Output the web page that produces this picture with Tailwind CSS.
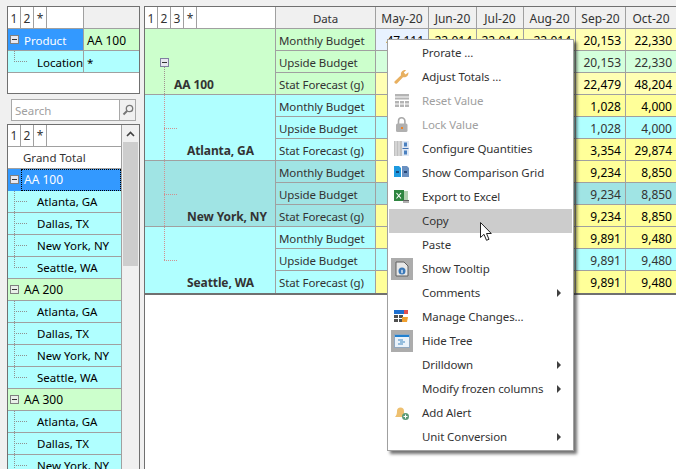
<!DOCTYPE html>
<html lang="en">
<head>
    <meta charset="UTF-8">
    <title>Forecast grid</title>
    <script src="https://cdn.jsdelivr.net/npm/@tailwindcss/browser@4"></script>
</head>
<body class="relative h-[469px] w-[676px] overflow-hidden bg-[#f0f0f0] font-['Noto_Sans',sans-serif] text-[11.5px] leading-[21px] tracking-[-0.1px] text-[#333]">
<div class="flex h-full">
    <!-- left panel -->
    <aside class="ml-[7px] mt-[6px] w-[133px] shrink-0 tracking-normal">
        <div class="h-[88px] border border-[#707070] bg-white leading-[23px]">
            <div class="flex h-[22px] border-b border-[#a0a0a0]">
                <div class="w-[13px] border-r border-[#a0a0a0] text-center text-[12px]">1</div>
                <div class="w-[13px] border-r border-[#a0a0a0] text-center text-[12px]">2</div>
                <div class="w-[13px] border-r border-[#a0a0a0] text-center text-[12px]">*</div>
                <div class="w-[37px] border-r border-[#a0a0a0]"></div>
                <div class="flex-1 bg-[#f0f0f0]"></div>
            </div>
            <div class="flex h-[22px] border-b border-[#a0a0a0]">
                <div class="relative w-[76px] border-r border-[#a0a0a0] bg-[#3399ff] pl-[16px] text-white">
                    Product
                    <span class="absolute left-[2px] top-[6px] flex h-[9px] w-[9px] items-center justify-center border border-[#808080] bg-[#e8e8f0]"><span class="h-px w-[5px] bg-[#333]"></span></span>
                </div>
                <div class="flex-1 bg-[#ccffcc] pl-[3px] text-[12px] text-black">AA 100</div>
            </div>
            <div class="flex h-[22px] border-b border-[#a0a0a0]">
                <div class="relative w-[76px] border-r border-[#a0a0a0] bg-[#b0ffff] pl-[29px] text-black">
                    Location
                    <span class="absolute left-[6px] top-0 h-[11px] border-l border-dotted border-[#909090]"></span>
                    <span class="absolute left-[6px] top-[10px] w-[13px] border-t border-dotted border-[#909090]"></span>
                </div>
                <div class="flex-1 bg-[#b0ffff] pl-[3px] text-black">*</div>
            </div>
        </div>

        <div class="ml-[4px] mt-[5px] flex h-[22px] w-[125px] border border-[#a8a8a8] bg-white">
            <div class="flex-1 pl-[3px] text-[#a0a0a0]">Search</div>
            <div class="flex w-[16px] items-center justify-center border-l border-[#a8a8a8] bg-[#f0f0f0]">
                <svg width="12" height="12" viewBox="0 0 12 12" fill="none" stroke="#777" stroke-width="1.3"><circle cx="7.5" cy="4.500" r="3.200"/><path d="M5 7 1.500 10.500" stroke-width="2"/></svg>
            </div>
        </div>

        <div class="mt-[3px] flex h-[400px] border border-b-0 border-[#707070] bg-white">
            <div class="w-[114px] border-r border-[#a0a0a0]">
                <div class="flex h-[22px] border-b border-[#a0a0a0]">
                    <div class="w-[13px] border-r border-[#a0a0a0] text-center text-[12px]">1</div>
                    <div class="w-[13px] border-r border-[#a0a0a0] text-center text-[12px]">2</div>
                    <div class="w-[13px] border-r border-[#a0a0a0] text-center text-[12px]">*</div>
                </div>
                <div class="h-[22px] border-b border-[#a0a0a0] pl-[15px]">Grand Total</div>
                <div class="relative h-[22px] bg-[#3399ff] pl-[16px] text-[12px] text-white">
                    <div class="absolute inset-y-0 left-[13px] right-0 border border-dotted border-black"></div>
                    AA 100
                    <span class="absolute left-[2px] top-[6px] flex h-[9px] w-[9px] items-center justify-center border border-[#808080] bg-[#e8e8f0]"><span class="h-px w-[5px] bg-[#333]"></span></span>
                </div>
                <div class="relative h-[22px] border-b border-[#a0a0a0] bg-[#b0ffff] pl-[29px] text-black">Atlanta, GA<span class="absolute inset-y-0 left-[6px] border-l border-dotted border-[#909090]"></span><span class="absolute left-[6px] top-[10px] w-[13px] border-t border-dotted border-[#909090]"></span></div>
                <div class="relative h-[22px] border-b border-[#a0a0a0] bg-[#b0ffff] pl-[29px] text-black">Dallas, TX<span class="absolute inset-y-0 left-[6px] border-l border-dotted border-[#909090]"></span><span class="absolute left-[6px] top-[10px] w-[13px] border-t border-dotted border-[#909090]"></span></div>
                <div class="relative h-[22px] border-b border-[#a0a0a0] bg-[#b0ffff] pl-[29px] text-black">New York, NY<span class="absolute inset-y-0 left-[6px] border-l border-dotted border-[#909090]"></span><span class="absolute left-[6px] top-[10px] w-[13px] border-t border-dotted border-[#909090]"></span></div>
                <div class="relative h-[22px] border-b border-[#a0a0a0] bg-[#b0ffff] pl-[29px] text-black">Seattle, WA<span class="absolute left-[6px] top-0 h-[11px] border-l border-dotted border-[#909090]"></span><span class="absolute left-[6px] top-[10px] w-[13px] border-t border-dotted border-[#909090]"></span></div>
                <div class="relative h-[22px] border-b border-[#a0a0a0] bg-[#ccffcc] pl-[16px] text-[12px] text-black">
                    AA 200
                    <span class="absolute left-[2px] top-[6px] flex h-[9px] w-[9px] items-center justify-center border border-[#808080] bg-[#e8f0e8]"><span class="h-px w-[5px] bg-[#333]"></span></span>
                </div>
                <div class="relative h-[22px] border-b border-[#a0a0a0] bg-[#b0ffff] pl-[29px] text-black">Atlanta, GA<span class="absolute inset-y-0 left-[6px] border-l border-dotted border-[#909090]"></span><span class="absolute left-[6px] top-[10px] w-[13px] border-t border-dotted border-[#909090]"></span></div>
                <div class="relative h-[22px] border-b border-[#a0a0a0] bg-[#b0ffff] pl-[29px] text-black">Dallas, TX<span class="absolute inset-y-0 left-[6px] border-l border-dotted border-[#909090]"></span><span class="absolute left-[6px] top-[10px] w-[13px] border-t border-dotted border-[#909090]"></span></div>
                <div class="relative h-[22px] border-b border-[#a0a0a0] bg-[#b0ffff] pl-[29px] text-black">New York, NY<span class="absolute inset-y-0 left-[6px] border-l border-dotted border-[#909090]"></span><span class="absolute left-[6px] top-[10px] w-[13px] border-t border-dotted border-[#909090]"></span></div>
                <div class="relative h-[22px] border-b border-[#a0a0a0] bg-[#b0ffff] pl-[29px] text-black">Seattle, WA<span class="absolute left-[6px] top-0 h-[11px] border-l border-dotted border-[#909090]"></span><span class="absolute left-[6px] top-[10px] w-[13px] border-t border-dotted border-[#909090]"></span></div>
                <div class="relative h-[22px] border-b border-[#a0a0a0] bg-[#ccffcc] pl-[16px] text-[12px] text-black">
                    AA 300
                    <span class="absolute left-[2px] top-[6px] flex h-[9px] w-[9px] items-center justify-center border border-[#808080] bg-[#e8f0e8]"><span class="h-px w-[5px] bg-[#333]"></span></span>
                </div>
                <div class="relative h-[22px] border-b border-[#a0a0a0] bg-[#b0ffff] pl-[29px] text-black">Atlanta, GA<span class="absolute inset-y-0 left-[6px] border-l border-dotted border-[#909090]"></span><span class="absolute left-[6px] top-[10px] w-[13px] border-t border-dotted border-[#909090]"></span></div>
                <div class="relative h-[22px] border-b border-[#a0a0a0] bg-[#b0ffff] pl-[29px] text-black">Dallas, TX<span class="absolute inset-y-0 left-[6px] border-l border-dotted border-[#909090]"></span><span class="absolute left-[6px] top-[10px] w-[13px] border-t border-dotted border-[#909090]"></span></div>
                <div class="relative h-[22px] border-b border-[#a0a0a0] bg-[#b0ffff] pl-[29px] text-black">New York, NY<span class="absolute inset-y-0 left-[6px] border-l border-dotted border-[#909090]"></span><span class="absolute left-[6px] top-[10px] w-[13px] border-t border-dotted border-[#909090]"></span></div>
            </div>
            <!-- scrollbar -->
            <div class="flex-1 bg-[#f0f0f0] px-px">
                <div class="flex h-[17px] items-center justify-center">
                    <svg width="9" height="6" viewBox="0 0 9 6" fill="none" stroke="#404040" stroke-width="1.6"><path d="M1 5 4.500 1.500 8 5"/></svg>
                </div>
                <div class="h-[124px] bg-[#cdcdcd]"></div>
            </div>
        </div>
    </aside>

    <!-- main grid -->
    <main class="ml-[4px] mt-[6px] flex-1 border-l border-t border-[#707070] bg-white leading-[23px]">
        <div class="grid grid-cols-[131px_100px_53px_48px_47px_52px_50px_50px] grid-rows-[22px_repeat(12,22px)] border-b-2 border-[#707070] text-[#333]">
            <!-- header -->
            <div class="flex border-b border-r border-[#a0a0a0] bg-white text-[12px] tracking-normal">
                <div class="w-[13px] border-r border-[#a0a0a0] text-center">1</div>
                <div class="w-[13px] border-r border-[#a0a0a0] text-center">2</div>
                <div class="w-[13px] border-r border-[#a0a0a0] text-center">3</div>
                <div class="w-[13px] border-r border-[#a0a0a0] text-center">*</div>
            </div>
            <div class="border-b border-r border-[#a0a0a0] bg-[#f0f0f0] text-center">Data</div>
            <div class="border-b border-r border-[#a0a0a0] bg-[#f0f0f0] text-center text-[12px] tracking-normal">May-20</div>
            <div class="border-b border-r border-[#a0a0a0] bg-[#f0f0f0] text-center text-[12px] tracking-normal">Jun-20</div>
            <div class="border-b border-r border-[#a0a0a0] bg-[#f0f0f0] text-center text-[12px] tracking-normal">Jul-20</div>
            <div class="border-b border-r border-[#a0a0a0] bg-[#f0f0f0] text-center text-[12px] tracking-normal">Aug-20</div>
            <div class="border-b border-r border-[#a0a0a0] bg-[#f0f0f0] text-center text-[12px] tracking-normal">Sep-20</div>
            <div class="border-b border-[#a0a0a0] bg-[#f0f0f0] text-center text-[12px] tracking-normal">Oct-20</div>

            <!-- AA 100 -->
            <div class="relative col-start-1 row-span-3 row-start-2 border-b border-r border-[#a0a0a0] bg-[#ccffcc] pl-[29px] pt-[44px] text-[12px] font-bold">
                AA 100
                <span class="absolute left-[15px] top-[29px] flex h-[9px] w-[9px] items-center justify-center border border-[#8080a0] bg-[#e8e8f0]"><span class="h-px w-[5px] bg-[#333]"></span></span>
                <span class="absolute bottom-0 left-[19px] top-[38px] border-l border-dotted border-[#a09090]"></span>
            </div>
            <div class="col-start-2 row-start-2 border-b border-r border-[#a0a0a0] bg-[#ccffcc] pl-[3px]">Monthly Budget</div>
            <div class="col-start-3 row-start-2 border-b border-r border-[#a0a0a0] bg-[#e8f2ff] bg-[radial-gradient(#d0d8c8_0.5px,transparent_0.7px)] bg-size-[4px_4px] pr-[4px] text-right text-[12px] tracking-normal text-black">47,111</div>
            <div class="border-b border-r border-[#a0a0a0] bg-[#ffffb4] bg-[radial-gradient(#e8d880_0.5px,transparent_0.7px)] bg-size-[4px_4px] pr-[4px] text-right text-[12px] tracking-normal text-black">22,014</div>
            <div class="border-b border-r border-[#a0a0a0] bg-[#ffffb4] bg-[radial-gradient(#e8d880_0.5px,transparent_0.7px)] bg-size-[4px_4px] pr-[4px] text-right text-[12px] tracking-normal text-black">22,014</div>
            <div class="border-b border-r border-[#a0a0a0] bg-[#ffffb4] bg-[radial-gradient(#e8d880_0.5px,transparent_0.7px)] bg-size-[4px_4px] pr-[4px] text-right text-[12px] tracking-normal text-black">22,014</div>
            <div class="border-b border-r border-[#a0a0a0] bg-[#ffffb4] bg-[radial-gradient(#e8d880_0.5px,transparent_0.7px)] bg-size-[4px_4px] pr-[4px] text-right text-[12px] tracking-normal text-black">20,153</div>
            <div class="border-b border-[#a0a0a0] bg-[#ffffb4] bg-[radial-gradient(#e8d880_0.5px,transparent_0.7px)] bg-size-[4px_4px] pr-[4px] text-right text-[12px] tracking-normal text-black">22,330</div>

            <div class="col-start-2 row-start-3 border-b border-r border-[#a0a0a0] bg-[#ccffcc] pl-[3px]">Upside Budget</div>
            <div class="border-b border-r border-[#a0a0a0] bg-[#d4ffdc] bg-[radial-gradient(#b8e0b0_0.5px,transparent_0.7px)] bg-size-[4px_4px]"></div>
            <div class="border-b border-r border-[#a0a0a0] bg-[#d4ffdc] bg-[radial-gradient(#b8e0b0_0.5px,transparent_0.7px)] bg-size-[4px_4px]"></div>
            <div class="border-b border-r border-[#a0a0a0] bg-[#d4ffdc] bg-[radial-gradient(#b8e0b0_0.5px,transparent_0.7px)] bg-size-[4px_4px]"></div>
            <div class="border-b border-r border-[#a0a0a0] bg-[#d4ffdc] bg-[radial-gradient(#b8e0b0_0.5px,transparent_0.7px)] bg-size-[4px_4px]"></div>
            <div class="border-b border-r border-[#a0a0a0] bg-[#d4ffdc] bg-[radial-gradient(#b8e0b0_0.5px,transparent_0.7px)] bg-size-[4px_4px] pr-[4px] text-right text-[12px] tracking-normal">20,153</div>
            <div class="border-b border-[#a0a0a0] bg-[#d4ffdc] bg-[radial-gradient(#b8e0b0_0.5px,transparent_0.7px)] bg-size-[4px_4px] pr-[4px] text-right text-[12px] tracking-normal">22,330</div>

            <div class="col-start-2 row-start-4 border-b border-r border-[#a0a0a0] bg-[#ccffcc] pl-[3px]">Stat Forecast (g)</div>
            <div class="border-b border-r border-[#a0a0a0] bg-[#ffffb4] bg-[radial-gradient(#e8d880_0.5px,transparent_0.7px)] bg-size-[4px_4px]"></div>
            <div class="border-b border-r border-[#a0a0a0] bg-[#ffffb4] bg-[radial-gradient(#e8d880_0.5px,transparent_0.7px)] bg-size-[4px_4px]"></div>
            <div class="border-b border-r border-[#a0a0a0] bg-[#ffffb4] bg-[radial-gradient(#e8d880_0.5px,transparent_0.7px)] bg-size-[4px_4px]"></div>
            <div class="border-b border-r border-[#a0a0a0] bg-[#ffffb4] bg-[radial-gradient(#e8d880_0.5px,transparent_0.7px)] bg-size-[4px_4px]"></div>
            <div class="border-b border-r border-[#a0a0a0] bg-[#ffffb4] bg-[radial-gradient(#e8d880_0.5px,transparent_0.7px)] bg-size-[4px_4px] pr-[4px] text-right text-[12px] tracking-normal text-black">22,479</div>
            <div class="border-b border-[#a0a0a0] bg-[#ffffb4] bg-[radial-gradient(#e8d880_0.5px,transparent_0.7px)] bg-size-[4px_4px] pr-[4px] text-right text-[12px] tracking-normal text-black">48,204</div>

            <!-- Atlanta -->
            <div class="relative col-start-1 row-span-3 row-start-5 border-b border-r border-[#a0a0a0] bg-[#b0ffff] pl-[42px] pt-[44px] text-[12px] font-bold">
                Atlanta, GA
                <span class="absolute inset-y-0 left-[19px] border-l border-dotted border-[#d09090]"></span>
                <span class="absolute left-[19px] top-[33px] w-[13px] border-t border-dotted border-[#d09090]"></span>
            </div>
            <div class="col-start-2 row-start-5 border-b border-r border-[#a0a0a0] bg-[#b0ffff] pl-[3px]">Monthly Budget</div>
            <div class="col-span-4 col-start-3 row-start-5 border-b border-r border-[#a0a0a0] bg-[#ffff99]"></div>
            <div class="col-start-7 row-start-5 border-b border-r border-[#a0a0a0] bg-[#ffff99] pr-[4px] text-right text-[12px] tracking-normal text-black">1,028</div>
            <div class="border-b border-[#a0a0a0] bg-[#ffff99] pr-[4px] text-right text-[12px] tracking-normal text-black">4,000</div>

            <div class="col-start-2 row-start-6 border-b border-r border-[#a0a0a0] bg-[#b0ffff] pl-[3px]">Upside Budget</div>
            <div class="col-span-4 col-start-3 row-start-6 border-b border-r border-[#a0a0a0] bg-[#b0ffff]"></div>
            <div class="col-start-7 row-start-6 border-b border-r border-[#a0a0a0] bg-[#b0ffff] pr-[4px] text-right text-[12px] tracking-normal">1,028</div>
            <div class="border-b border-[#a0a0a0] bg-[#b0ffff] pr-[4px] text-right text-[12px] tracking-normal">4,000</div>

            <div class="col-start-2 row-start-7 border-b border-r border-[#a0a0a0] bg-[#b0ffff] pl-[3px]">Stat Forecast (g)</div>
            <div class="col-span-4 col-start-3 row-start-7 border-b border-r border-[#a0a0a0] bg-[#ffff99]"></div>
            <div class="col-start-7 row-start-7 border-b border-r border-[#a0a0a0] bg-[#ffff99] pr-[4px] text-right text-[12px] tracking-normal text-black">3,354</div>
            <div class="border-b border-[#a0a0a0] bg-[#ffff99] pr-[4px] text-right text-[12px] tracking-normal text-black">29,874</div>

            <!-- New York -->
            <div class="relative col-start-1 row-span-3 row-start-8 border-b border-r border-[#a0a0a0] bg-[#a0e4e4] pl-[42px] pt-[44px] text-[12px] font-bold">
                New York, NY
                <span class="absolute inset-y-0 left-[19px] border-l border-dotted border-[#d09090]"></span>
                <span class="absolute left-[19px] top-[33px] w-[13px] border-t border-dotted border-[#d09090]"></span>
            </div>
            <div class="col-start-2 row-start-8 border-b border-r border-[#a0a0a0] bg-[#a0e4e4] pl-[3px]">Monthly Budget</div>
            <div class="col-span-4 col-start-3 row-start-8 border-b border-r border-[#a0a0a0] bg-[#ffff99]"></div>
            <div class="col-start-7 row-start-8 border-b border-r border-[#a0a0a0] bg-[#ffff99] pr-[4px] text-right text-[12px] tracking-normal text-black">9,234</div>
            <div class="border-b border-[#a0a0a0] bg-[#ffff99] pr-[4px] text-right text-[12px] tracking-normal text-black">8,850</div>

            <div class="col-start-2 row-start-9 border-b border-r border-[#a0a0a0] bg-[#a0e4e4] pl-[3px]">Upside Budget</div>
            <div class="col-span-4 col-start-3 row-start-9 border-b border-r border-[#a0a0a0] bg-[#a0e4e4]"></div>
            <div class="col-start-7 row-start-9 border-b border-r border-[#a0a0a0] bg-[#a0e4e4] pr-[4px] text-right text-[12px] tracking-normal">9,234</div>
            <div class="border-b border-[#a0a0a0] bg-[#a0e4e4] pr-[4px] text-right text-[12px] tracking-normal">8,850</div>

            <div class="col-start-2 row-start-10 border-b border-r border-[#a0a0a0] bg-[#a0e4e4] pl-[3px]">Stat Forecast (g)</div>
            <div class="col-span-4 col-start-3 row-start-10 border-b border-r border-[#a0a0a0] bg-[#ffff99]"></div>
            <div class="col-start-7 row-start-10 border-b border-r border-[#a0a0a0] bg-[#ffff99] pr-[4px] text-right text-[12px] tracking-normal text-black">9,234</div>
            <div class="border-b border-[#a0a0a0] bg-[#ffff99] pr-[4px] text-right text-[12px] tracking-normal text-black">8,850</div>

            <!-- Seattle -->
            <div class="relative col-start-1 row-span-3 row-start-11 border-r border-[#a0a0a0] bg-[#b0ffff] pl-[42px] pt-[44px] text-[12px] font-bold">
                Seattle, WA
                <span class="absolute left-[19px] top-0 h-[33px] border-l border-dotted border-[#d09090]"></span>
                <span class="absolute left-[19px] top-[33px] w-[13px] border-t border-dotted border-[#d09090]"></span>
            </div>
            <div class="col-start-2 row-start-11 border-b border-r border-[#a0a0a0] bg-[#b0ffff] pl-[3px]">Monthly Budget</div>
            <div class="col-span-4 col-start-3 row-start-11 border-b border-r border-[#a0a0a0] bg-[#ffff99]"></div>
            <div class="col-start-7 row-start-11 border-b border-r border-[#a0a0a0] bg-[#ffff99] pr-[4px] text-right text-[12px] tracking-normal text-black">9,891</div>
            <div class="border-b border-[#a0a0a0] bg-[#ffff99] pr-[4px] text-right text-[12px] tracking-normal text-black">9,480</div>

            <div class="col-start-2 row-start-12 border-b border-r border-[#a0a0a0] bg-[#b0ffff] pl-[3px]">Upside Budget</div>
            <div class="col-span-4 col-start-3 row-start-12 border-b border-r border-[#a0a0a0] bg-[#b0ffff]"></div>
            <div class="col-start-7 row-start-12 border-b border-r border-[#a0a0a0] bg-[#b0ffff] pr-[4px] text-right text-[12px] tracking-normal">9,891</div>
            <div class="border-b border-[#a0a0a0] bg-[#b0ffff] pr-[4px] text-right text-[12px] tracking-normal">9,480</div>

            <div class="col-start-2 row-start-13 border-r border-[#a0a0a0] bg-[#b0ffff] pl-[3px]">Stat Forecast (g)</div>
            <div class="col-span-4 col-start-3 row-start-13 border-r border-[#a0a0a0] bg-[#ffff99]"></div>
            <div class="col-start-7 row-start-13 border-r border-[#a0a0a0] bg-[#ffff99] pr-[4px] text-right text-[12px] tracking-normal text-black">9,891</div>
            <div class="bg-[#ffff99] pr-[4px] text-right text-[12px] tracking-normal text-black">9,480</div>
        </div>
    </main>
</div>

<!-- context menu -->
<div class="absolute left-[387px] top-[39px] w-[187px] border border-[#a0a0a0] bg-white py-[1px] shadow-[3px_3px_3px_rgba(0,0,0,0.55)]">
    <div class="flex h-[24px] items-center pb-[1px] pl-[34px]">Prorate ...</div>
    <div class="flex h-[24px] items-center pb-[1px] pl-[5px]">
        <svg class="mr-[12px]" width="17" height="17" viewBox="0 0 17 17"><path d="M1.500 13.500 8 7.200C7.200 4.500 9.500 1.500 13.200 2L10.800 4.600 12.600 6.600 15.400 4.200C15.800 7.600 13 10 10 9.200L4 15.400C2.600 16.200.8 14.800 1.500 13.500Z" fill="#e8b060"/></svg>
        Adjust Totals ...
    </div>
    <div class="flex h-[24px] items-center pb-[1px] pl-[5px] text-[#a0a0a0]">
        <svg class="mr-[12px]" width="17" height="17" viewBox="0 0 17 17" fill="#b4b4b4"><rect x="2" y="2" width="14" height="2.500"/><rect x="2" y="5.500" width="14" height="2"/><rect x="2" y="9" width="4" height="2.500"/><rect x="7" y="9" width="4" height="2.500"/><rect x="12" y="9" width="4" height="2.500"/><rect x="2" y="12.500" width="4" height="2.500"/><rect x="7" y="12.500" width="4" height="2.500"/><rect x="12" y="12.500" width="4" height="2.500"/></svg>
        Reset Value
    </div>
    <div class="flex h-[24px] items-center pb-[1px] pl-[5px] text-[#a0a0a0]">
        <svg class="mr-[12px]" width="17" height="17" viewBox="0 0 17 17"><path d="M5.500 8V5a3.200 3.200 0 0 1 6.400 0v3" fill="none" stroke="#a8a8a8" stroke-width="1.600"/><rect x="3" y="7.500" width="11.500" height="8.500" rx="1.500" fill="#b0b0b0"/><rect x="8" y="11" width="2" height="2" fill="#f08020"/></svg>
        Lock Value
    </div>
    <div class="flex h-[24px] items-center pb-[1px] pl-[5px]">
        <svg class="mr-[12px]" width="17" height="17" viewBox="0 0 17 17"><rect x="1" y="1" width="8" height="15" fill="#c0c0c0"/><path d="M3 1v15M6 1v15" stroke="#e8e8e8"/><rect x="9" y="1" width="7" height="15" fill="#dfe8f4"/><path d="M9.500 8.500h6" stroke="#4070b0"/><rect x="11" y="2.500" width="3" height="4" fill="#4a80c0"/><rect x="11" y="10.500" width="3" height="4" fill="#4a80c0"/></svg>
        Configure Quantities
    </div>
    <div class="flex h-[24px] items-center pb-[1px] pl-[5px]">
        <svg class="mr-[12px]" width="17" height="17" viewBox="0 0 17 17"><path d="M1 2h5l2 2v9H1Z" fill="#1e9ae0"/><path d="M9 2h5l2 2v9H9Z" fill="#6a90c0"/><path d="M3 8h3M11 8h3" stroke="#103060" stroke-width="1.400"/></svg>
        Show Comparison Grid
    </div>
    <div class="flex h-[24px] items-center pb-[1px] pl-[5px]">
        <svg class="mr-[12px]" width="17" height="17" viewBox="0 0 17 17"><rect x="1" y="2" width="10" height="11" fill="#2e8540"/><path d="M3.500 5 8 10.500M8 5l-4.500 5.500" stroke="#fff" stroke-width="1.100"/><rect x="11" y="3" width="4" height="9" fill="#b0d0b0"/><path d="M10 14h6M10 12.500h6" stroke="#606060"/></svg>
        Export to Excel
    </div>
    <div class="mx-px flex h-[24px] items-center bg-[#cccccc] pb-[1px] pl-[33px]">Copy</div>
    <div class="flex h-[24px] items-center pb-[1px] pl-[34px]">Paste</div>
    <div class="flex h-[24px] items-center pb-[1px] pl-[3px]">
        <div class="mr-[9px] flex h-[22px] w-[22px] items-center justify-center bg-[#acacac]">
            <svg width="14" height="16" viewBox="0 0 14 16"><path d="M1 1h8l4 4v10H1Z" fill="#e8e8e8" stroke="#606060"/><circle cx="7" cy="10" r="3.500" fill="#3a78b8"/><rect x="6.400" y="8.800" width="1.200" height="3.400" fill="#fff"/></svg>
        </div>
        Show Tooltip
    </div>
    <div class="relative flex h-[24px] items-center pb-[1px] pl-[34px]">Comments<span class="absolute right-[12px] top-[8px] h-0 w-0 border-y-[4px] border-l-[4px] border-y-transparent border-l-[#404040]"></span></div>
    <div class="flex h-[24px] items-center pb-[1px] pl-[5px]">
        <svg class="mr-[12px]" width="17" height="17" viewBox="0 0 17 17"><rect x="1" y="2" width="10" height="4" fill="#1e70d0"/><rect x="11" y="2" width="4" height="4" fill="#e05050"/><path d="M1 7h4v3H1ZM6 7h4v3H6ZM1 11h4v3H1ZM6 11h4v3H6Z" fill="#505050"/><path d="M9 9h6l-1 5H9Z" fill="#f0a030"/></svg>
        Manage Changes...
    </div>
    <div class="flex h-[24px] items-center pb-[1px] pl-[3px]">
        <div class="mr-[9px] flex h-[22px] w-[22px] items-center justify-center bg-[#acacac]">
            <svg width="16" height="14" viewBox="0 0 16 14"><rect x=".5" y=".5" width="15" height="13" fill="#eaf2fa" stroke="#90a8c0"/><rect x="1" y="1" width="14" height="2" fill="#2080d0"/><path d="M4 6h5M6 8h5M4 10h5" stroke="#4088c0"/></svg>
        </div>
        Hide Tree
    </div>
    <div class="relative flex h-[24px] items-center pb-[1px] pl-[34px]">Drilldown<span class="absolute right-[12px] top-[8px] h-0 w-0 border-y-[4px] border-l-[4px] border-y-transparent border-l-[#404040]"></span></div>
    <div class="relative flex h-[24px] items-center pb-[1px] pl-[34px]">Modify frozen columns<span class="absolute right-[12px] top-[8px] h-0 w-0 border-y-[4px] border-l-[4px] border-y-transparent border-l-[#404040]"></span></div>
    <div class="flex h-[24px] items-center pb-[1px] pl-[5px]">
        <svg class="mr-[12px]" width="17" height="17" viewBox="0 0 17 17"><path d="M2 13c1.500-1.500 2-3 2-6a3.500 3.500 0 0 1 7 0c0 3 .5 4.500 2 6Z" fill="#eec070"/><circle cx="12.500" cy="12.500" r="3.500" fill="#5a9a78"/><path d="M12.500 10.500v4M10.500 12.500h4" stroke="#fff"/></svg>
        Add Alert
    </div>
    <div class="relative flex h-[24px] items-center pb-[1px] pl-[34px]">Unit Conversion<span class="absolute right-[12px] top-[8px] h-0 w-0 border-y-[4px] border-l-[4px] border-y-transparent border-l-[#404040]"></span></div>
</div>

<!-- mouse pointer -->
<svg class="absolute left-[480px] top-[222px]" width="13" height="20" viewBox="0 0 13 20"><path d="M.5.5v15l3.500-3.200 2.500 6 2.500-1-2.500-5.800h4.800Z" fill="#fff" stroke="#222"/></svg>
</body>
</html>
